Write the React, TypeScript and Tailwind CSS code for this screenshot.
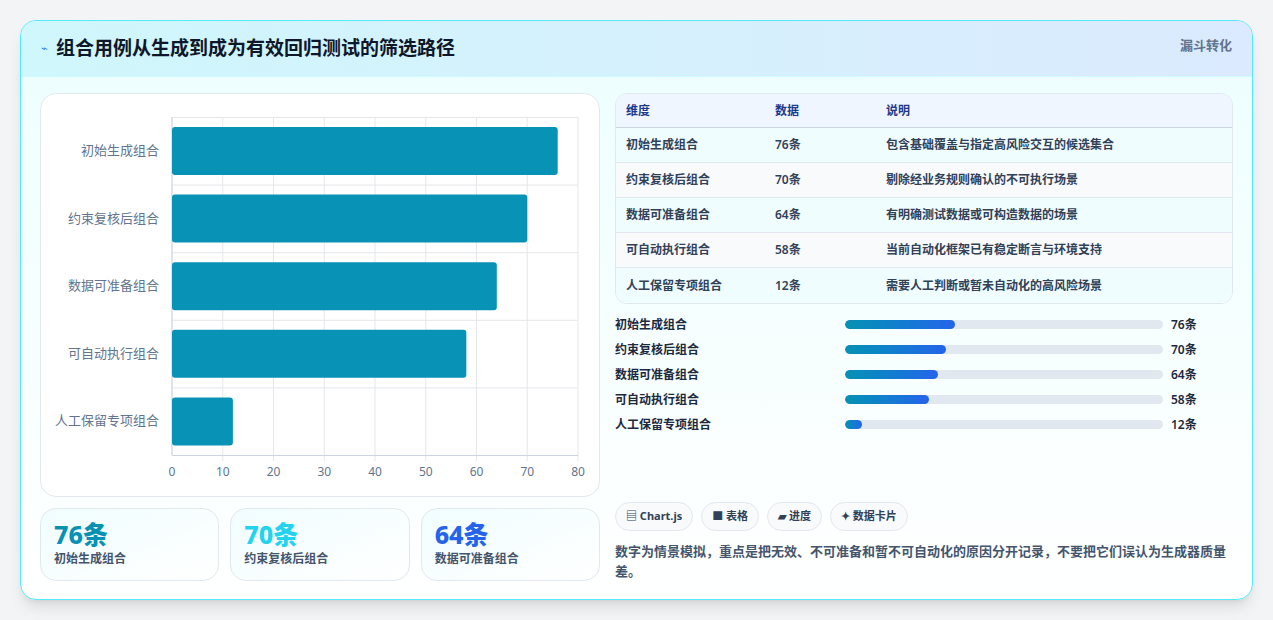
const rows = [
  ["初始生成组合", 76, "包含基础覆盖与指定高风险交互的候选集合"],
  ["约束复核后组合", 70, "剔除经业务规则确认的不可执行场景"],
  ["数据可准备组合", 64, "有明确测试数据或可构造数据的场景"],
  ["可自动执行组合", 58, "当前自动化框架已有稳定断言与环境支持"],
  ["人工保留专项组合", 12, "需要人工判断或暂未自动化的高风险场景"],
] as const;

function Chart() {
  const W = 406, H = 338;
  return (
    <div className="flex-1 rounded-2xl border border-slate-200 bg-white flex items-start pt-[23px] pl-[14px]">
      <div className="flex flex-col w-[116px] h-[338px]">
        {rows.map((r) => (
          <div key={r[0]} className="flex-1 flex items-center justify-end pr-[12px] text-[13px] text-slate-500">{r[0]}</div>
        ))}
      </div>
      <div className="flex flex-col">
        <svg width={W + 2} height={H + 8} className="block">
          {[0, 1, 2, 3, 4, 5, 6, 7, 8].map((i) => (
            <line key={i} x1={1 + i * 50.75} x2={1 + i * 50.75} y1={0} y2={H + (i === 0 ? 0 : 6)} stroke="#e5e7eb" />
          ))}
          {[0, 1, 2, 3, 4, 5].map((i) => (
            <line key={i} x1={1} x2={W + 1} y1={0.5 + i * 67.6} y2={0.5 + i * 67.6} stroke={i === 5 ? "#cbd5e1" : "#e5e7eb"} />
          ))}
          <line x1={1} x2={1} y1={0} y2={H} stroke="#cbd5e1" />
          {rows.map((r, i) => (
            <rect key={i} x={1} y={i * 67.6 + 10} width={(r[1] / 80) * W} height={48} rx={3} fill="#0893b6" />
          ))}
        </svg>
        <div className="relative h-[20px] w-[408px] text-[12px] text-slate-500">
          {[0, 10, 20, 30, 40, 50, 60, 70, 80].map((v, i) => (
            <span key={v} className="absolute -translate-x-1/2" style={{ left: 1 + i * 50.75 }}>{v}</span>
          ))}
        </div>
      </div>
    </div>
  );
}

export default function App() {
  const f = { fontFamily: '"Noto Sans", "Noto Sans CJK SC", sans-serif' };
  return (
    <div className="w-[1273px] h-[620px] bg-[#f3f4f6] p-5 pb-0" style={f}>
      <div className="h-[580px] rounded-2xl border border-cyan-300 bg-gradient-to-b from-[#ecfeff] to-white overflow-hidden flex flex-col shadow-lg">
        <div className="h-[56px] flex items-center justify-between px-5 bg-gradient-to-r from-[#cff7fc] to-[#dbeafe] border-b border-cyan-100">
          <div className="flex items-center gap-2">
            <span className="text-[11px] text-blue-500">⌁</span>
            <span className="text-[19px] font-bold text-slate-900">组合用例从生成到成为有效回归测试的筛选路径</span>
          </div>
          <span className="text-[13px] font-bold text-slate-500 self-start mt-[15px]">漏斗转化</span>
        </div>
        <div className="flex-1 flex gap-[15px] px-[19px] pt-[16px] pb-[18px]">
          <div className="w-[560px] flex flex-col gap-[11px]">
            <Chart />
            <div className="flex gap-[11px] h-[73px]">
              {[["76条", "text-[#0891b2]"], ["70条", "text-[#22d3ee]"], ["64条", "text-[#2563eb]"]].map(([v, c], i) => (
                <div key={v} className="flex-1 rounded-2xl border border-slate-200 bg-gradient-to-br from-[#f0fdff] to-white px-[13px] pt-[9px]">
                  <div className={`text-[25px] font-extrabold leading-[32px] ${c}`}>{v}</div>
                  <div className="text-[12px] text-slate-600 font-semibold">{rows[i][0]}</div>
                </div>
              ))}
            </div>
          </div>
          <div className="flex-1 flex flex-col">
            <div className="rounded-xl border border-slate-200 overflow-hidden text-[12px] font-semibold text-slate-700">
              <div className="flex h-[34px] items-center bg-[#eff6ff] border-b border-slate-300 text-[#1e3a8a] px-[10px]">
                <span className="w-[149px]">维度</span><span className="w-[111px]">数据</span><span>说明</span>
              </div>
              {rows.map((r, i) => (
                <div key={r[0]} className={`flex h-[35px] items-center px-[10px] ${i < 4 ? "border-b border-slate-200" : ""} ${i % 2 ? "bg-[#f8fafc]" : "bg-[#f0fdff]"}`}>
                  <span className="w-[149px]">{r[0]}</span><span className="w-[111px]">{r[1]}条</span><span>{r[2]}</span>
                </div>
              ))}
            </div>
            <div className="flex flex-col mt-[8px] text-[12px] font-semibold text-slate-800">
              {rows.map((r) => (
                <div key={r[0]} className="flex items-center h-[25px]">
                  <span className="w-[230px]">{r[0]}</span>
                  <div className="w-[318px] h-[9px] rounded-full bg-[#e2e8f0] overflow-hidden">
                    <div className="h-full rounded-full bg-gradient-to-r from-[#0891b2] to-[#2563eb]" style={{ width: `${(r[1] / 220) * 100}%` }} />
                  </div>
                  <span className="ml-2">{r[1]}条</span>
                </div>
              ))}
            </div>
            <div className="flex-1" />
            <div className="flex gap-[8px] text-[11px] font-bold text-slate-700">
              {["▤ Chart.js", "■ 表格", "▰ 进度", "✦ 数据卡片"].map((t) => (
                <span key={t} className="h-[29px] px-[10px] flex items-center rounded-full border border-slate-200 bg-[#f8fafc]">{t}</span>
              ))}
            </div>
            <p className="mt-[10px] text-[13px] font-semibold text-slate-600 leading-[20px]">
              数字为情景模拟，重点是把无效、不可准备和暂不可自动化的原因分开记录，不要把它们误认为生成器质量差。
            </p>
          </div>
        </div>
      </div>
    </div>
  );
}
